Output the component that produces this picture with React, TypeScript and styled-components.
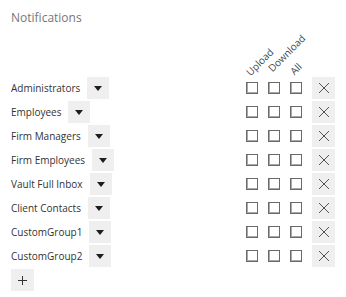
import styled, { createGlobalStyle } from "styled-components";

const GlobalStyle = createGlobalStyle`
  body {
    margin: 0;
    background: #fff;
    font-family: "Open Sans", "Liberation Sans", sans-serif;
  }
`;

const Page = styled.div`
  width: 346px;
  box-sizing: border-box;
  padding: 10px 11px 0 11px;
`;

const Title = styled.h2`
  margin: 0;
  font-size: 12px;
  font-weight: 400;
  line-height: 16px;
  color: #777;
`;

const Grid = styled.div`
  display: grid;
  grid-template-columns: 1fr 22px 22px 22px 28px;
`;

const HeaderRow = styled(Grid)`
  height: 50px;
`;

const HeaderCell = styled.div`
  display: flex;
  align-items: flex-end;
  overflow: visible;
`;

const HeaderLabel = styled.span<{ $lift: number }>`
  display: inline-block;
  white-space: nowrap;
  font-size: 10px;
  line-height: 11px;
  color: #444;
  margin-left: 11px;
  margin-bottom: ${(p) => p.$lift}px;
  transform: rotate(-45deg);
  transform-origin: 0 100%;
`;

const Row = styled(Grid)`
  height: 24px;
  align-items: center;
`;

const LabelCell = styled.div`
  display: flex;
  align-items: center;
  gap: 7px;
`;

const Label = styled.span`
  font-size: 10px;
  color: #333;
`;

const GrayButton = styled.button`
  width: 22px;
  height: 22px;
  padding: 0;
  border: none;
  background: #efefef;
  display: flex;
  align-items: center;
  justify-content: center;
  cursor: pointer;
`;

const Caret = styled.span`
  width: 0;
  height: 0;
  border-left: 4.5px solid transparent;
  border-right: 4.5px solid transparent;
  border-top: 5px solid #1e1e1e;
`;

const BoxCell = styled.div`
  display: flex;
  justify-content: center;
`;

const Box = styled.span`
  width: 12px;
  height: 12px;
  box-sizing: border-box;
  border: 1px solid #6a6a6a;
  box-shadow: inset 1px -1px 0 #a8a8a8;
  background: #fff;
`;

const RemoveCell = styled.div`
  display: flex;
  justify-content: flex-end;
`;

const RemoveButton = styled(GrayButton)`
  width: 23px;
`;

const AddButton = styled(GrayButton)`
  width: 23px;
`;

const groups = [
  "Administrators",
  "Employees",
  "Firm Managers",
  "Firm Employees",
  "Vault Full Inbox",
  "Client Contacts",
  "CustomGroup1",
  "CustomGroup2",
];

const columns = [
  { name: "Upload", lift: -2 },
  { name: "Download", lift: 2 },
  { name: "All", lift: -1 },
];

function Cross() {
  return (
    <svg width="12" height="12" viewBox="0 0 12 12">
      <path d="M1 1 L11 11 M11 1 L1 11" stroke="#555" strokeWidth="1" fill="none" />
    </svg>
  );
}

function Plus() {
  return (
    <svg width="9" height="9" viewBox="0 0 9 9">
      <path d="M4.5 0 V9 M0 4.5 H9" stroke="#333" strokeWidth="1" fill="none" />
    </svg>
  );
}

export default function App() {
  return (
    <Page>
      <GlobalStyle />
      <Title>Notifications</Title>
      <HeaderRow>
        <div />
        {columns.map((c) => (
          <HeaderCell key={c.name}>
            <HeaderLabel $lift={c.lift}>{c.name}</HeaderLabel>
          </HeaderCell>
        ))}
        <div />
      </HeaderRow>
      {groups.map((g) => (
        <Row key={g}>
          <LabelCell>
            <Label>{g}</Label>
            <GrayButton>
              <Caret />
            </GrayButton>
          </LabelCell>
          {columns.map((c) => (
            <BoxCell key={c.name}>
              <Box />
            </BoxCell>
          ))}
          <RemoveCell>
            <RemoveButton>
              <Cross />
            </RemoveButton>
          </RemoveCell>
        </Row>
      ))}
      <Row>
        <LabelCell>
          <AddButton>
            <Plus />
          </AddButton>
        </LabelCell>
      </Row>
    </Page>
  );
}
